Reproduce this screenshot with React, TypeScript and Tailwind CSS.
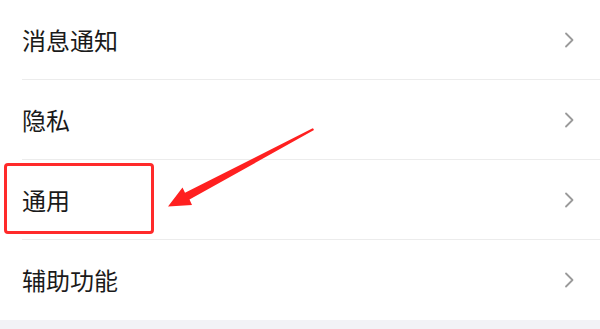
import React from "react";

const items = ["消息通知", "隐私", "通用", "辅助功能"];

function Chevron() {
  return (
    <svg width="10" height="16" viewBox="0 0 10 16" className="shrink-0">
      <path d="M2 1.5 L8.5 8 L2 14.5" fill="none" stroke="#9a9a9a" strokeWidth="1.8" strokeLinecap="round" strokeLinejoin="round" />
    </svg>
  );
}

export default function App() {
  return (
    <div
      className="relative w-[600px] h-[329px] bg-white overflow-hidden"
      style={{ fontFamily: '"Noto Sans CJK SC", "Noto Sans", sans-serif' }}
    >
      <div className="flex flex-col">
        {items.map((t, i) => (
          <div key={t} className="pl-[22px] h-[80px] flex flex-col">
            <div className="flex-1 flex items-center justify-between pr-[26px]">
              <span className="text-[24px] leading-none text-[#1a1a1a]">{t}</span>
              <Chevron />
            </div>
            {i < items.length - 1 && <div className="h-px bg-[#ececec]" />}
          </div>
        ))}
      </div>
      <div className="h-[9px] bg-[#f2f2f6]" />

      {/* red highlight box */}
      <div className="absolute left-[4px] top-[163px] w-[150px] h-[71px] border-[3px] border-[#ff2a2a] rounded-[4px]" />

      {/* arrow */}
      <svg className="absolute left-0 top-0" width="600" height="329" viewBox="0 0 600 329">
        <polygon
          points="313,128.2 314,130 189.5,199.5 192,205 168,206.5 182.5,187.5 185,192.8 312.2,128.6"
          fill="#ff2020"
        />
      </svg>
    </div>
  );
}
